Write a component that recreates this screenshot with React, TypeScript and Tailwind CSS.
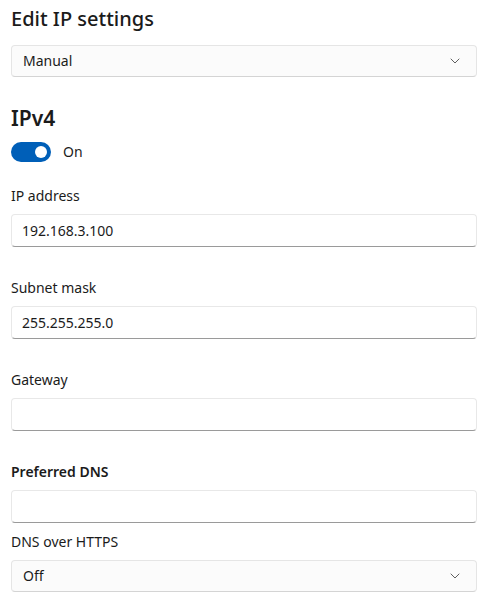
import React, { useState } from 'react';

const FONT = { fontFamily: '"Segoe UI", "Noto Sans", sans-serif' };

function Chevron() {
  return (
    <svg width="10" height="6" viewBox="0 0 10 6" fill="none" className="text-[#5f5f5f]">
      <path d="M1 1l4 4 4-4" stroke="currentColor" strokeWidth="1" strokeLinecap="round" strokeLinejoin="round" />
    </svg>
  );
}

function ComboBox({ value }: { value: string }) {
  return (
    <div className="flex h-8 items-center justify-between rounded-[4px] border border-[#e5e5e5] border-b-[#d4d4d4] bg-[#fbfbfb] pl-[11px] pr-4 text-sm text-[#1b1b1b]">
      <span>{value}</span>
      <Chevron />
    </div>
  );
}

function TextBox({ value }: { value?: string }) {
  return (
    <div className="flex h-[33px] items-center rounded-[4px] border border-[#e8e8e8] border-b-[#9a9a9a] bg-white px-[10px] text-sm text-[#1b1b1b]">
      {value}
    </div>
  );
}

function Field({ label, value, bold }: { label: string; value?: string; bold?: boolean }) {
  return (
    <div className="flex flex-col gap-2">
      <label className={`text-sm leading-5 text-[#1b1b1b] ${bold ? 'font-semibold' : ''}`}>{label}</label>
      <TextBox value={value} />
    </div>
  );
}

export default function App() {
  const [on, setOn] = useState(true);

  return (
    <div className="min-h-[600px] bg-white px-[11px] pt-[5px]" style={FONT}>
      <h2 className="text-[20px] font-medium leading-7 text-[#1b1b1b]">Edit IP settings</h2>
      <div className="mt-3">
        <ComboBox value="Manual" />
      </div>

      <h3 className="mt-[27px] text-[21px] font-semibold leading-7 text-[#1b1b1b]">IPv4</h3>
      <div className="mt-[10px] flex items-center gap-3">
        <button
          onClick={() => setOn(v => !v)}
          className="flex h-5 w-10 items-center justify-end rounded-full bg-[#005fb8] px-1"
        >
          <span className="h-3 w-3 rounded-full bg-white" />
        </button>
        <span className="text-sm text-[#1b1b1b]">{on ? 'On' : 'Off'}</span>
      </div>

      <div className="mt-[24px] flex flex-col gap-[31px]">
        <Field label="IP address" value="192.168.3.100" />
        <Field label="Subnet mask" value="255.255.255.0" />
        <Field label="Gateway" />
        <Field label="Preferred DNS" bold />
      </div>

      <div className="mt-[9px] flex flex-col gap-2">
        <label className="text-sm leading-5 text-[#1b1b1b]">DNS over HTTPS</label>
        <ComboBox value="Off" />
      </div>
    </div>
  );
}
